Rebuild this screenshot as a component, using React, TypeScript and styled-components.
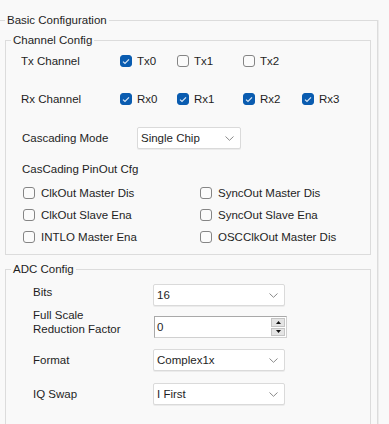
import React from 'react';
import styled, { createGlobalStyle } from 'styled-components';

const GlobalStyle = createGlobalStyle`
  html, body {
    margin: 0;
    padding: 0;
    background: #f9f9f9;
  }
  body {
    width: 389px;
    height: 424px;
    overflow: hidden;
    font-family: "Liberation Sans", Arial, sans-serif;
    font-size: 11.5px;
    color: #1e1e1e;
  }
`;

const GroupBox = styled.fieldset<{ $outer?: boolean; $top: number }>`
  min-width: 0;
  padding: 0;
  border: 1px solid #dcdcdc;
  border-left: ${(p) => (p.$outer ? 'none' : '1px solid #dcdcdc')};
  margin: ${(p) => (p.$outer ? `${p.$top}px 11px 0 0` : `${p.$top}px 6px 0 5px`)};
  box-shadow: ${(p) => (p.$outer ? '1px 0 0 #ececec' : 'none')};
`;

const Legend = styled.legend`
  margin-left: 5px;
  padding: 0 2px;
  line-height: 14px;
  color: #1e1e1e;
`;

const ChannelBody = styled.div`
  padding: 0 0 6px 0;
`;

const ChannelRow = styled.div<{ $gap?: number }>`
  display: grid;
  grid-template-columns: 99px 57px 66px 59px auto;
  align-items: center;
  height: 28px;
  margin-top: ${(p) => p.$gap ?? 0}px;
  padding-left: 15px;
`;

const CascadeRow = styled.div`
  display: grid;
  grid-template-columns: 115px auto;
  align-items: center;
  margin-top: 14px;
  height: 22px;
  padding-left: 16px;
`;

const SubTitle = styled.div`
  margin-top: 12px;
  line-height: 16px;
  padding-left: 16px;
`;

const PinGrid = styled.div`
  display: grid;
  grid-template-columns: 177px 1fr;
  grid-auto-rows: 22px;
  align-items: center;
  margin-top: 5px;
  padding-left: 17px;
`;

const CheckItem = styled.label<{ $gap?: number }>`
  display: flex;
  align-items: center;
  gap: ${(p) => p.$gap ?? 5}px;
  white-space: nowrap;
`;

const Box = styled.span<{ $checked?: boolean }>`
  box-sizing: border-box;
  width: 12px;
  height: 12px;
  border-radius: 3px;
  display: inline-flex;
  align-items: center;
  justify-content: center;
  background: ${(p) => (p.$checked ? '#0a5cb0' : '#fbfbfb')};
  border: 1px solid ${(p) => (p.$checked ? '#0a5cb0' : '#858585')};
`;

const SelectBox = styled.div<{ $width: number }>`
  box-sizing: border-box;
  width: ${(p) => p.$width}px;
  height: 22px;
  display: flex;
  align-items: center;
  justify-content: space-between;
  padding: 0 6px 0 3px;
  background: #ffffff;
  border: 1px solid #dadada;
  border-radius: 2px;
  box-shadow: 0 1px 0 #ebebeb;
`;

const AdcBody = styled.div`
  padding: 0 0 40px 27px;
`;

const AdcRow = styled.div<{ $gap: number; $height: number }>`
  display: grid;
  grid-template-columns: 120px auto;
  margin-top: ${(p) => p.$gap}px;
  min-height: ${(p) => p.$height}px;
`;

const AdcLabel = styled.div<{ $align?: string }>`
  align-self: ${(p) => p.$align ?? 'center'};
  line-height: 14px;
`;

const BitsLabel = styled(AdcLabel)`
  line-height: 16px;
`;

const Cell = styled.div<{ $align?: string }>`
  align-self: ${(p) => p.$align ?? 'center'};
  display: flex;
`;

const SpinBox = styled.div`
  box-sizing: border-box;
  width: 133px;
  height: 22px;
  margin-left: 1px;
  display: flex;
  align-items: stretch;
  background: #ffffff;
  border: 1px solid #a9a9a9;
  border-right-color: #d0d0d0;
  border-bottom-color: #d0d0d0;
`;

const SpinText = styled.div`
  flex: 1;
  display: flex;
  align-items: center;
  padding-left: 2px;
`;

const SpinButtons = styled.div`
  width: 14px;
  display: flex;
  flex-direction: column;
  padding: 1px 1px 1px 0;
  gap: 1px;
`;

const SpinButton = styled.div`
  flex: 1;
  display: flex;
  align-items: center;
  justify-content: center;
  background: #e4e4e4;
  border: 1px solid #c4c4c4;
`;

const Check = () => (
  <svg width="8" height="7" viewBox="0 0 8 7">
    <polyline points="1,3.6 3,5.5 7,1.3" fill="none" stroke="#dbe8f7" strokeWidth="1.2" />
  </svg>
);

const Chevron = () => (
  <svg width="9" height="5" viewBox="0 0 9 5">
    <polyline points="0.5,0.5 4.5,4.3 8.5,0.5" fill="none" stroke="#8a8a8a" strokeWidth="1" />
  </svg>
);

const CheckBox: React.FC<{ label: string; checked?: boolean; gap?: number }> = ({ label, checked, gap }) => (
  <CheckItem $gap={gap}>
    <Box $checked={checked}>{checked && <Check />}</Box>
    {label}
  </CheckItem>
);

const Select: React.FC<{ value: string; width: number }> = ({ value, width }) => (
  <SelectBox $width={width}>
    <span>{value}</span>
    <Chevron />
  </SelectBox>
);

const App: React.FC = () => (
  <>
    <GlobalStyle />
    <GroupBox $outer $top={13}>
      <Legend>Basic Configuration</Legend>

      <GroupBox $top={6}>
        <Legend>Channel Config</Legend>
        <ChannelBody>
          <ChannelRow>
            <span>Tx Channel</span>
            <CheckBox label="Tx0" checked />
            <CheckBox label="Tx1" />
            <CheckBox label="Tx2" />
          </ChannelRow>
          <ChannelRow $gap={10}>
            <span>Rx Channel</span>
            <CheckBox label="Rx0" checked />
            <CheckBox label="Rx1" checked />
            <CheckBox label="Rx2" checked />
            <CheckBox label="Rx3" checked />
          </ChannelRow>
          <CascadeRow>
            <span>Cascading Mode</span>
            <Select value="Single Chip" width={104} />
          </CascadeRow>
          <SubTitle>CasCading PinOut Cfg</SubTitle>
          <PinGrid>
            <CheckBox label="ClkOut Master Dis" gap={6} />
            <CheckBox label="SyncOut Master Dis" gap={6} />
            <CheckBox label="ClkOut Slave Ena" gap={6} />
            <CheckBox label="SyncOut Slave Ena" gap={6} />
            <CheckBox label="INTLO Master Ena" gap={6} />
            <CheckBox label="OSCClkOut Master Dis" gap={6} />
          </PinGrid>
        </ChannelBody>
      </GroupBox>

      <GroupBox $top={7}>
        <Legend>ADC Config</Legend>
        <AdcBody>
          <AdcRow $gap={8} $height={22}>
            <BitsLabel $align="start">Bits</BitsLabel>
            <Cell>
              <Select value="16" width={132} />
            </Cell>
          </AdcRow>
          <AdcRow $gap={2} $height={30}>
            <AdcLabel $align="start">
              Full Scale
              <br />
              Reduction Factor
            </AdcLabel>
            <Cell $align="end">
              <SpinBox>
                <SpinText>0</SpinText>
                <SpinButtons>
                  <SpinButton>
                    <svg width="5" height="3" viewBox="0 0 5 3">
                      <polygon points="0,3 2.5,0 5,3" fill="#111" />
                    </svg>
                  </SpinButton>
                  <SpinButton>
                    <svg width="5" height="3" viewBox="0 0 5 3">
                      <polygon points="0,0 2.5,3 5,0" fill="#111" />
                    </svg>
                  </SpinButton>
                </SpinButtons>
              </SpinBox>
            </Cell>
          </AdcRow>
          <AdcRow $gap={11} $height={22}>
            <AdcLabel>Format</AdcLabel>
            <Cell>
              <Select value="Complex1x" width={132} />
            </Cell>
          </AdcRow>
          <AdcRow $gap={12} $height={22}>
            <AdcLabel>IQ Swap</AdcLabel>
            <Cell>
              <Select value="I First" width={132} />
            </Cell>
          </AdcRow>
        </AdcBody>
      </GroupBox>
    </GroupBox>
  </>
);

export default App;
